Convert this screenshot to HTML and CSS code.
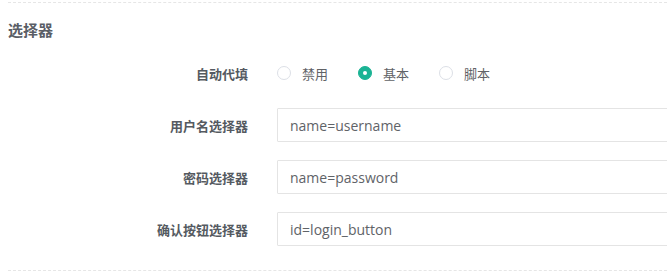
FILE: index.html
```html
<!DOCTYPE html>
<html lang="zh-CN">
<head>
    <meta charset="UTF-8">
    <meta name="viewport" content="width=device-width, initial-scale=1.0">
    <title>选择器</title>
    <link rel="stylesheet" href="styles.css">
</head>
<body>
    <section class="panel">
        <div class="panel-title">选择器</div>

        <div class="form">
            <div class="form-item">
                <label class="form-label">自动代填</label>
                <div class="form-content">
                    <label class="radio">
                        <span class="radio-inner"></span>
                        <span class="radio-label">禁用</span>
                    </label>
                    <label class="radio checked">
                        <span class="radio-inner"></span>
                        <span class="radio-label">基本</span>
                    </label>
                    <label class="radio">
                        <span class="radio-inner"></span>
                        <span class="radio-label">脚本</span>
                    </label>
                </div>
            </div>

            <div class="form-item">
                <label class="form-label">用户名选择器</label>
                <div class="form-content">
                    <input class="text-input" type="text" value="name=username">
                </div>
            </div>

            <div class="form-item">
                <label class="form-label">密码选择器</label>
                <div class="form-content">
                    <input class="text-input" type="text" value="name=password">
                </div>
            </div>

            <div class="form-item">
                <label class="form-label">确认按钮选择器</label>
                <div class="form-content">
                    <input class="text-input" type="text" value="id=login_button">
                </div>
            </div>
        </div>
    </section>
</body>
</html>
```

FILE: styles.css
```css
body {
    margin: 0;
    padding: 0;
    background-color: #fff;
    font-family: "Noto Sans", "Noto Sans CJK SC", sans-serif;
    color: #606266;
}
.panel {
    margin: 2px 0 0 8px;
    border-top: 1px dashed #e6e6e6;
    border-bottom: 1px dashed #e6e6e6;
    padding-bottom: 24px;
}
.panel-title {
    margin-top: 17px;
    font-size: 15px;
    font-weight: 700;
    line-height: 20px;
    color: #5a5e66;
}
.form {
    margin-top: 16px;
}
.form-item {
    display: flex;
    align-items: center;
    height: 34px;
    margin-bottom: 18px;
}
.form-item:last-child {
    margin-bottom: 0;
}
.form-label {
    flex-shrink: 0;
    width: 240px;
    padding-right: 29px;
    text-align: right;
    font-size: 13px;
    font-weight: 700;
    color: #555a61;
}
/* поле уходит за правый край, как в оригинале */
.form-content {
    flex: 1;
    min-width: 0;
    overflow: hidden;
    display: flex;
    align-items: center;
}
.radio {
    display: flex;
    align-items: center;
    margin-right: 30px;
    font-size: 13px;
    cursor: pointer;
}
.radio-inner {
    box-sizing: border-box;
    width: 14px;
    height: 14px;
    border: 1px solid #dcdfe6;
    border-radius: 50%;
    position: relative;
}
.radio.checked .radio-inner {
    background-color: #1ab394;
    border-color: #1ab394;
}
.radio.checked .radio-inner::after {
    content: "";
    position: absolute;
    left: 4px;
    top: 4px;
    width: 4px;
    height: 4px;
    border-radius: 50%;
    background-color: #fff;
}
.radio-label {
    padding-left: 11px;
    color: #606266;
}
.text-input {
    flex-shrink: 0;
    box-sizing: border-box;
    width: 440px;
    height: 34px;
    padding: 0 12px;
    border: 1px solid #e4e4e4;
    border-radius: 1px;
    font-family: "Open Sans", "Noto Sans CJK SC", sans-serif;
    font-size: 14px;
    color: #5f6368;
    outline: none;
}
```
